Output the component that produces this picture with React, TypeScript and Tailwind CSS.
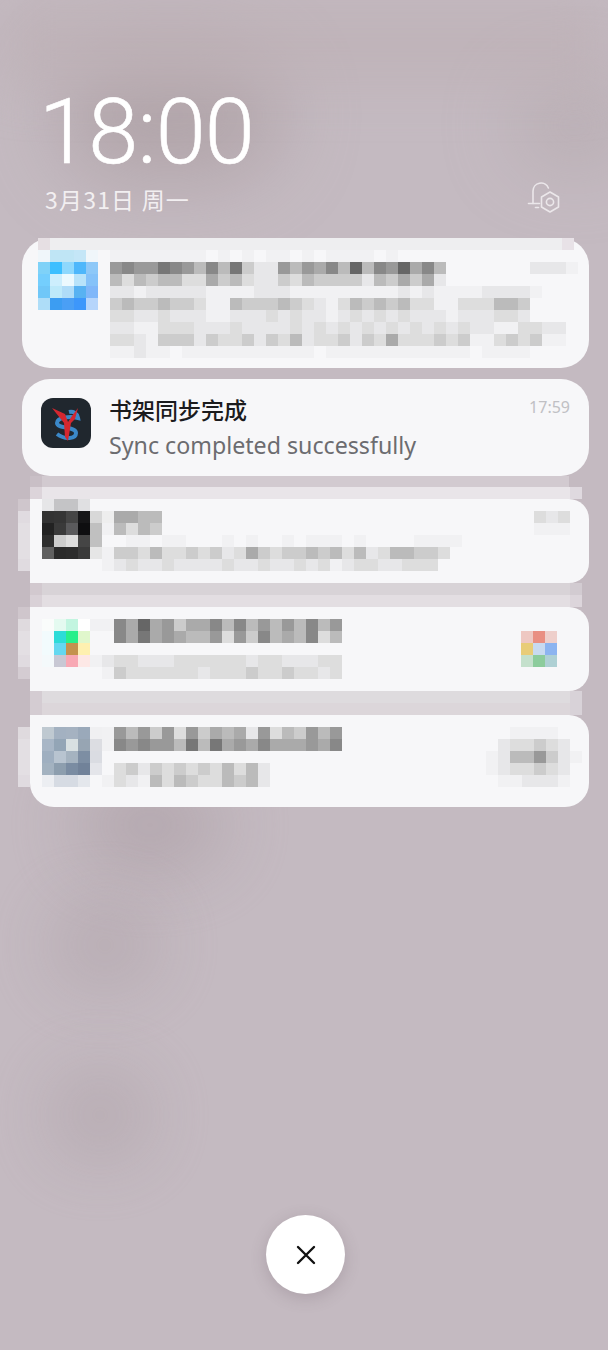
const CARD = "#f7f7f9";

function gray(row: string) {
  return row.split("").map((c) => {
    if (c === ".") return "transparent";
    if (c === "f") return "#f1f1f3";
    if (c === "e") return "#e7e7e9";
    return `#${c}${c}${c}`;
  });
}

function Cells({ rows }: { rows: string[][] }) {
  return (
    <div className="flex flex-col">
      {rows.map((row, i) => (
        <div key={i} className="flex h-3">
          {row.map((color, j) => (
            <div key={j} className="h-3 w-3 shrink-0" style={{ backgroundColor: color }} />
          ))}
        </div>
      ))}
    </div>
  );
}

function Grays({ rows }: { rows: string[] }) {
  return <Cells rows={rows.map(gray)} />;
}

function Band({ left, mid, right }: { left: string; mid: string; right: string }) {
  return (
    <div className="flex h-3 w-[552px]" style={{ backgroundColor: mid }}>
      <div className="h-3 w-3" style={{ backgroundColor: left }} />
      <div className="flex-1" />
      <div className="h-3 w-3" style={{ backgroundColor: right }} />
    </div>
  );
}

function Gutter({ colors }: { colors: string[] }) {
  return (
    <div className="flex w-3 shrink-0 flex-col">
      {colors.map((color, i) => (
        <div key={i} className="h-3 w-3" style={{ backgroundColor: color }} />
      ))}
    </div>
  );
}

const card1Icon = [
  ["#f0f6fa", "#bfe5f5", "#bfe5f5", "#c4e6f7", "#f0f6fa"],
  ["#7fd2f8", "#3dbfff", "#8ed8fd", "#4eb7fb", "#8dc8f8"],
  ["#74cefd", "#cdeefd", "#ecf9fe", "#b8e3fa", "#85c2f9"],
  ["#70c7f8", "#bde9fa", "#afdcf8", "#58b2f2", "#80b7f9"],
  ["#aeddf8", "#3c9df2", "#4a9ff5", "#3d97fb", "#b6d5fb"],
];
const card1Text = [
  "ffffffff.f.f.ff.f.ffff.f",
  "9899789b8b7cee9b9a8b6b896a8b.......eeef",
  "bdbcbbddacbdeecdbccccebcacae",
  "eefeeeeeffffeeefffffffffefeffffeeeef",
  "cbccbccdffbcccbcdefdbcbcbddffdddbbc",
  "ddeedeeeffeeededeefedededeeefeeedde",
  "eeffdddeeedeeeededededededededeeffddee",
  "ddefcccecddcecdbeddcecdadddcdcffdcdcff",
  "ffeff.fffffffffff.ffffffffffff.ffff",
];
const card3Icon = [
  ["#e6e6e8", "#c4c4c6", "#c4c4c6", "#e0e0e2", CARD, CARD],
  ["#333333", "#353535", "#454545", "#161618", "#d8d8d8", "#eeeeee"],
  ["#222222", "#3a3a3a", "#5a5a5c", "#0e0e10", "#c0c0c0", "#f1f1f3"],
  ["#2e2e2e", "#cccccc", "#dddddd", "#454545", "#c0c0c0", CARD],
  ["#606060", "#2a2a2a", "#2c2c2c", "#3a3a3a", "#e6e6e6", "#f1f1f3"],
  [CARD, CARD, CARD, CARD, CARD, "#f1f1f3"],
];
const card3Text = [
  "................................",
  "aabb...............................ded",
  "bdbc...............................fff",
  ".ff.ff...f.f..f.fff.f....ffff",
  "ccdbddcdcedacdccbcbdbedbbccd",
  "edeedeeeedeedeededfeddeeddd",
];
const card4Icon = [
  ["#fafcfb", "#e4faf0", "#c2f5e0", "#ffffff", "#f1f1f3", "#f1f1f3"],
  ["#f2fbfd", "#2cdcd8", "#28ef8a", "#e0f7cc", CARD, CARD],
  ["#f2fbfd", "#64d8f0", "#c4924e", "#fef0b0", CARD, CARD],
  ["#f4f9fb", "#c8c8d4", "#f8a8b4", "#fde8e6", "#f1f1f3", "#e7e7e9"],
  [CARD, CARD, CARD, CARD, CARD, "#f1f1f3"],
];
const card4Text = [
  "8a6a9caa8b8b9b9b8b9",
  "8a7a9abb9d9c8bab8db",
  "...................",
  "ddeeeddddddeddeeedd",
  "cddddddedddcddcdded",
];
const card4Thumb = [
  ["#eec8c2", "#e98f82", "#eecfcb"],
  ["#e8cc78", "#c8daf0", "#8cb4f0"],
  ["#c4e0cc", "#8ccc9c", "#aed0d4"],
];
const card5Icon = [
  ["#bfc9d1", "#a3b1c1", "#a5b2c1", "#9aa9ba", "#f0f0f2", "#f1f1f3"],
  ["#a8b6c6", "#93a5b6", "#d8e0e2", "#97a5b3", "#dcdde2", "#f1f1f3"],
  ["#9fafc0", "#b8c4d0", "#a5b3c0", "#7d8ea3", "#dadce2", CARD],
  ["#a3b2c0", "#8d9eae", "#7a8ca2", "#718299", "#e4e5ea", CARD],
  ["#eceef2", "#d6dbe3", "#d6dbe3", "#e4e7ec", CARD, "#f1f1f3"],
];
const card5Text = [
  "9b9c9d9cabae9dbc9b9..............ffff",
  "89899b7b7a9a8aaa9a8.............eddcde",
  "...............................febb9cef",
  "dcecdcdcdbdbe..................feddcde",
  "defbdbcddbcbe...................ffeeef",
];

function BellIcon() {
  return (
    <svg width="34" height="32" viewBox="0 0 34 32" fill="none" stroke="#ebe7ea" strokeWidth="1.6" strokeLinecap="round" strokeLinejoin="round">
      <path d="M1.5 22.5h11" />
      <path d="M6 22.5V10a8 8 0 0 1 15.4-3" />
      <path d="M8.5 26.5h3" />
      <path d="M23 11l8.5 5v10l-8.5 5-8.5-5V16z" />
      <circle cx="23" cy="21" r="3.6" />
    </svg>
  );
}

function AppLogo() {
  return (
    <svg width="50" height="50" viewBox="0 0 50 50" className="shrink-0 rounded-[12px] bg-[#20272e]">
      <path d="M28 14c4-1 8 1 9 6-7-2-21-1-21 5 0 6 19 3 19 10 0 6-11 7-19 1" fill="none" stroke="#3b88c8" strokeWidth="4" />
      <path d="M11 10l13 6 3 8 4-6 6-8-3 11-4 4-3 18-3-4-1-14z" fill="#d4272f" />
    </svg>
  );
}

export default function App() {
  return (
    <div className="relative flex h-[1350px] w-[608px] flex-col overflow-hidden bg-[#c4bac1] font-['Noto_Sans','Noto_Sans_CJK_SC',sans-serif]">
      {/* wallpaper blobs */}
      <div className="absolute left-[60px] top-[50px] h-[130px] w-[220px] rounded-full bg-[#aa9ca0] opacity-70 blur-2xl" />
      <div className="absolute left-[520px] top-[90px] h-[70px] w-[110px] rounded-full bg-[#b0a3a8] opacity-70 blur-2xl" />
      <div className="absolute left-[80px] top-[790px] h-[70px] w-[140px] rounded-full bg-[#a89aa1] opacity-80 blur-2xl" />
      <div className="absolute left-[60px] top-[915px] h-[60px] w-[90px] rounded-full bg-[#a89aa1] opacity-80 blur-2xl" />
      <div className="absolute left-[60px] top-[1080px] h-[70px] w-[80px] rounded-full bg-[#a89aa1] opacity-80 blur-2xl" />
      <div className="absolute left-0 top-0 h-[90px] w-[608px] bg-[#bdb0b5] opacity-60 blur-xl" />

      <div className="relative flex flex-col">
        <div className="ml-[39px] mt-[83px] h-[98px] font-['Roboto',sans-serif] text-[90px] font-light leading-[100px] tracking-[-0.7px] text-white [-webkit-text-stroke:0.6px_white]">
          18:00
        </div>
        <div className="flex h-[57px] items-start justify-between pl-[45px] pr-[47px]">
          <div className="mt-[4px] font-['Noto_Sans_CJK_SC',sans-serif] text-[23px] leading-[28px] tracking-[1.2px] text-[#f2eff1]">
            3月31日 周一
          </div>
          <BellIcon />
        </div>

        {/* first notification */}
        <div className="ml-[22px] w-[567px] rounded-[28px]" style={{ backgroundColor: CARD }}>
          <div className="ml-4 flex h-3 w-[536px] justify-between bg-[#eeeef0]">
            <div className="h-3 w-3 bg-[#e6dfe3]" />
            <div className="h-3 w-3 bg-[#e8e2e7]" />
          </div>
          <div className="flex h-[118px] pl-4">
            <Cells rows={card1Icon} />
            <div className="ml-3">
              <Grays rows={card1Text} />
            </div>
          </div>
        </div>

        {/* the one readable notification */}
        <div className="ml-[22px] mt-[11px] flex h-[97px] w-[567px] rounded-[28px] pl-[19px] pr-[19px] pt-[19px]" style={{ backgroundColor: CARD }}>
          <AppLogo />
          <div className="ml-[18px] flex-1">
            <div className="flex items-start justify-between">
              <div className="-mt-[5px] font-['Noto_Sans_CJK_SC',sans-serif] text-[23px] font-medium leading-[32px] text-[#1b1b1d]">
                书架同步完成
              </div>
              <div className="-mt-[3px] text-[16px] leading-[24px] text-[#c0c0c4]">17:59</div>
            </div>
            <div className="mt-[4px] text-[23.2px] leading-[32px] text-[#6c6c70]">
              Sync completed successfully
            </div>
          </div>
        </div>

        {/* stacked blurred notifications */}
        <div className="ml-[30px] flex flex-col">
          <div className="flex h-[11px] w-[552px] bg-[#d2cad0]">
            <div className="h-[11px] w-3 bg-[#c9bfc6]" />
            <div className="flex-1" />
            <div className="h-[11px] w-[13px] bg-[#c4bac1]" />
          </div>
          <Band left="#dcd4da" mid="#e9e5e9" right="#dfd9df" />
          <div className="relative flex">
            <div className="absolute -left-3 top-0">
              <Gutter colors={["#cfc6cc", "#e0dbe0", "#e3dfe3", "#e3dfe3", "#e3dfe3", "#e0dbe0"]} />
            </div>
            <div className="flex h-[84px] w-[559px] rounded-r-[20px] pl-3" style={{ backgroundColor: CARD }}>
              <Cells rows={card3Icon} />
              <Grays rows={card3Text} />
            </div>
          </div>
          <Band left="#d2c9cf" mid="#d8d3d7" right="#d2cbd1" />
          <Band left="#d9d1d7" mid="#e3dee2" right="#dcd5db" />
          <div className="relative flex">
            <div className="absolute -left-3 top-0">
              <Gutter colors={["#cfc6cc", "#dfdade", "#e3dfe3", "#e3dfe3", "#e0dbe0", "#d4ccd2"]} />
            </div>
            <div className="flex h-[84px] w-[559px] rounded-r-[20px] pl-3 pr-[32px] pt-3" style={{ backgroundColor: CARD }}>
              <Cells rows={card4Icon} />
              <Grays rows={card4Text} />
              <div className="ml-auto mt-3">
                <Cells rows={card4Thumb} />
              </div>
            </div>
          </div>
          <Band left="#d4ccd2" mid="#dedbde" right="#d8d2d8" />
          <Band left="#d4ccd2" mid="#dcd6da" right="#d8d2d8" />
          <div className="relative flex">
            <div className="absolute -left-3 top-3">
              <Gutter colors={["#dfdade", "#e3dfe3", "#e3dfe3", "#e3dfe3", "#e0dbe0"]} />
            </div>
            <div className="flex h-[92px] w-[559px] rounded-b-[24px] rounded-tr-[20px] pl-3 pt-3" style={{ backgroundColor: CARD }}>
              <Cells rows={card5Icon} />
              <Grays rows={card5Text} />
            </div>
          </div>
        </div>
      </div>

      <button className="relative mb-[56px] ml-[266px] mt-auto flex h-[79px] w-[79px] items-center justify-center rounded-full bg-white shadow-[0_4px_16px_rgba(90,75,85,0.22)]">
        <svg width="20" height="20" viewBox="0 0 20 20" fill="none" stroke="#111111" strokeWidth="2.4" strokeLinecap="round">
          <path d="M2 2l16 16M18 2L2 18" />
        </svg>
      </button>
    </div>
  );
}
